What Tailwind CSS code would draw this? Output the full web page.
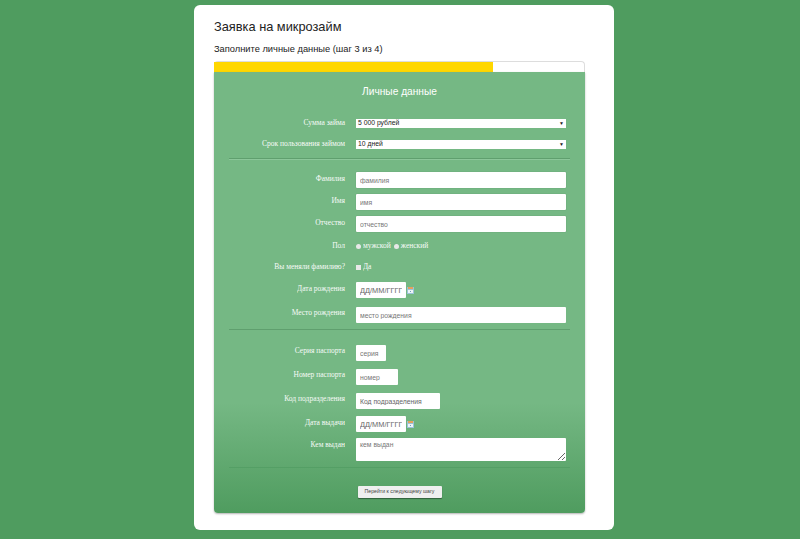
<!DOCTYPE html>
<html lang="ru">
<head>
  <meta charset="UTF-8" />
  <title>Заявка на микрозайм</title>
  <script src="https://cdn.jsdelivr.net/npm/@tailwindcss/browser@4"></script>
</head>
<body class="bg-[#4f9c5f] h-[539px] overflow-hidden font-['Liberation_Sans',sans-serif]">

  <div class="w-[420px] h-[525px] mt-[5px] ml-[194px] bg-white rounded-md pl-5 pr-[29px] pt-[14px]">
    <h1 class="text-[12.8px] leading-4 text-[#222]">Заявка на микрозайм</h1>
    <p class="mt-[8px] text-[9.3px] leading-3 text-[#222]">Заполните личные данные (шаг 3 из 4)</p>

    <!-- Прогресс -->
    <div class="mt-[6px] h-[11px] border-t border-r border-[#ddd] rounded-t-sm bg-white">
      <div class="h-full w-[279px] bg-[#ffd700]"></div>
    </div>

    <!-- Форма -->
    <form class="h-[441px] bg-gradient-to-b from-[#75b884] from-75% to-[#4f9c5f] rounded-b-sm shadow-[0_1px_2px_rgba(0,0,0,0.3)] font-['Liberation_Serif',serif] text-[7.5px] text-white">
      <h2 class="pt-[13px] text-center text-[10.2px] leading-[13px] font-['Liberation_Sans',sans-serif]">Личные данные</h2>

      <div class="flex items-center h-[9px] mt-[21px]">
        <label class="w-[131px] text-right opacity-95 mb-[2px]">Сумма займа</label>
        <div class="ml-[11px] w-[210px] h-[9px] bg-white flex items-center justify-between px-[2px] text-[6.8px] text-[#222] font-['Liberation_Sans',sans-serif]">5 000 рублей <span class="text-[5px]">▼</span></div>
      </div>
      <div class="flex items-center h-[9px] mt-[12px]">
        <label class="w-[131px] text-right opacity-95 mb-[2px]">Срок пользования займом</label>
        <div class="ml-[11px] w-[210px] h-[9px] bg-white flex items-center justify-between px-[2px] text-[6.8px] text-[#222] font-['Liberation_Sans',sans-serif]">10 дней <span class="text-[5px]">▼</span></div>
      </div>
      <hr class="mt-[9px] mx-[15px] border-t border-b border-t-[#5f9f6e] border-b-[#8cc79a]" />

      <div class="flex items-center h-4 mt-[12px]">
        <label class="w-[131px] text-right opacity-95 mb-[3px]">Фамилия</label>
        <input placeholder="фамилия" class="ml-[11px] w-[210px] h-4 bg-white rounded-[1px] px-1 text-[6.8px] placeholder:text-[#777] font-['Liberation_Sans',sans-serif] shadow-[0_0_1px_rgba(0,0,0,0.3)]" />
      </div>
      <div class="flex items-center h-4 mt-[6px]">
        <label class="w-[131px] text-right opacity-95 mb-[3px]">Имя</label>
        <input placeholder="имя" class="ml-[11px] w-[210px] h-4 bg-white rounded-[1px] px-1 text-[6.8px] placeholder:text-[#777] font-['Liberation_Sans',sans-serif] shadow-[0_0_1px_rgba(0,0,0,0.3)]" />
      </div>
      <div class="flex items-center h-4 mt-[6px]">
        <label class="w-[131px] text-right opacity-95 mb-[2px]">Отчество</label>
        <input placeholder="отчество" class="ml-[11px] w-[210px] h-4 bg-white rounded-[1px] px-1 text-[6.8px] placeholder:text-[#777] font-['Liberation_Sans',sans-serif] shadow-[0_0_1px_rgba(0,0,0,0.3)]" />
      </div>
      <div class="flex items-center h-4 mt-[6px]">
        <label class="w-[131px] text-right opacity-95">Пол</label>
        <div class="ml-[11px] flex items-center">
          <span class="w-[5px] h-[5px] rounded-full bg-[#e8e8e8]"></span><span class="ml-[2px] opacity-95">мужской</span>
          <span class="w-[5px] h-[5px] rounded-full bg-[#e8e8e8] ml-[3px]"></span><span class="ml-[2px] opacity-95">женский</span>
        </div>
      </div>
      <div class="flex items-center h-4 mt-[5px]">
        <label class="w-[131px] text-right opacity-95">Вы меняли фамилию?</label>
        <div class="ml-[11px] flex items-center">
          <span class="w-[5px] h-[5px] bg-[#e8e8e8]"></span><span class="ml-[2px] opacity-95">Да</span>
        </div>
      </div>
      <div class="flex items-center h-4 mt-[7px]">
        <label class="w-[131px] text-right opacity-95 mb-[2px]">Дата рождения</label>
        <input placeholder="ДД/ММ/ГГГГ" class="ml-[11px] w-[50px] h-4 bg-white rounded-[1px] px-1 text-[7.4px] placeholder:text-[#666] font-['Liberation_Sans',sans-serif]" />
        <svg class="ml-[1px]" width="7" height="7" viewBox="0 0 7 7"><rect width="7" height="7" fill="#9cc3d8"/><rect x="1" width="5" height="2" fill="#e8a05c"/><rect x="1" y="3" width="5" height="3" fill="#eef4f7"/><rect x="3" y="4" width="1" height="1" fill="#6f9fc0"/></svg>
      </div>
      <div class="flex items-center h-4 mt-[9px]">
        <label class="w-[131px] text-right opacity-95 mb-[4px]">Место рождения</label>
        <input placeholder="место рождения" class="ml-[11px] w-[210px] h-4 bg-white rounded-[1px] px-1 text-[6.8px] placeholder:text-[#777] font-['Liberation_Sans',sans-serif]" />
      </div>
      <hr class="mt-[6px] mx-[15px] border-t border-[#5f9f6e]" />

      <div class="flex items-center h-4 mt-[15px]">
        <label class="w-[131px] text-right opacity-95 mb-[4px]">Серия паспорта</label>
        <input placeholder="серия" class="ml-[11px] w-[30px] h-4 bg-white rounded-[1px] px-1 text-[6.8px] placeholder:text-[#777] font-['Liberation_Sans',sans-serif]" />
      </div>
      <div class="flex items-center h-4 mt-2">
        <label class="w-[131px] text-right opacity-95 mb-[5px]">Номер паспорта</label>
        <input placeholder="номер" class="ml-[11px] w-[42px] h-4 bg-white rounded-[1px] px-1 text-[6.8px] placeholder:text-[#777] font-['Liberation_Sans',sans-serif]" />
      </div>
      <div class="flex items-center h-4 mt-2">
        <label class="w-[131px] text-right opacity-95 mb-[5px]">Код подразделения</label>
        <input placeholder="Код подразделения" class="ml-[11px] w-[84px] h-4 bg-white rounded-[1px] px-1 text-[6.8px] placeholder:text-[#666] font-['Liberation_Sans',sans-serif]" />
      </div>
      <div class="flex items-center h-4 mt-[7px]">
        <label class="w-[131px] text-right opacity-95 mb-[2px]">Дата выдачи</label>
        <input placeholder="ДД/ММ/ГГГГ" class="ml-[11px] w-[50px] h-4 bg-white rounded-[1px] px-1 text-[7.4px] placeholder:text-[#666] font-['Liberation_Sans',sans-serif]" />
        <svg class="ml-[1px]" width="7" height="7" viewBox="0 0 7 7"><rect width="7" height="7" fill="#9cc3d8"/><rect x="1" width="5" height="2" fill="#e8a05c"/><rect x="1" y="3" width="5" height="3" fill="#eef4f7"/><rect x="3" y="4" width="1" height="1" fill="#6f9fc0"/></svg>
      </div>
      <div class="flex items-start h-[23px] mt-[6px]">
        <label class="w-[131px] text-right opacity-95 leading-[14px]">Кем выдан</label>
        <textarea placeholder="кем выдан" class="ml-[11px] w-[210px] h-[23px] bg-white rounded-[1px] px-1 py-[2px] text-[6.8px] leading-[9px] placeholder:text-[#777] font-['Liberation_Sans',sans-serif]"></textarea>
      </div>
      <hr class="mt-[6px] mx-[15px] border-t border-[#549f65]" />

      <div class="flex justify-center mt-[18px]">
        <button type="button" class="w-[84px] h-3 bg-[#efefef] rounded-[1px] text-[#444] text-[5.2px] font-['Liberation_Sans',sans-serif] shadow-[0_1px_1px_rgba(0,0,0,0.4)]">Перейти к следующему шагу</button>
      </div>
    </form>
  </div>

</body>
</html>
